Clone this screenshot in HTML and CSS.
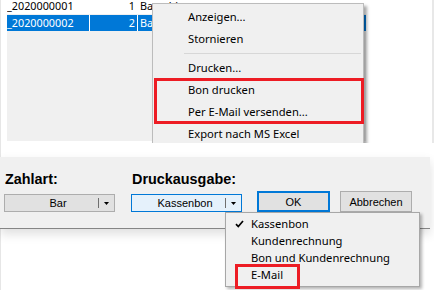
FILE: index.html
```html
<!DOCTYPE html>
<html lang="de">
<head>
  <meta charset="UTF-8" />
  <meta name="viewport" content="width=device-width, initial-scale=1.0" />
  <title>Bon drucken</title>
  <link rel="stylesheet" href="styles.css">
</head>
<body>
  <div class="top">
    <div class="grid">
      <div class="row first">
        <span class="cell">_2020000001</span>
        <span class="cell num">1</span>
        <span class="cell pad">Barzahlung</span>
      </div>
      <div class="row sel">
        <span class="cell">_2020000002</span>
        <span class="cell num">2</span>
        <span class="cell pad">Barzahlung</span>
      </div>
    </div>

    <div class="ctx">
      <div class="ctx-item">Anzeigen...</div>
      <div class="ctx-item">Stornieren</div>
      <div class="ctx-sep"></div>
      <div class="ctx-item">Drucken...</div>
      <div class="ctx-item">Bon drucken</div>
      <div class="ctx-item">Per E-Mail versenden...</div>
      <div class="ctx-item">Export nach MS Excel</div>
    </div>
    <div class="mark mark-menu"></div>
  </div>

  <div class="bottom">
    <div class="dialog">
      <div class="field">
        <div class="label">Zahlart:</div>
        <div class="combo">
          <span class="combo-text">Bar</span>
          <span class="combo-btn"><svg width="5" height="3" viewBox="0 0 5 3"><path d="M0 0h5L2.5 3z" fill="#000"/></svg></span>
        </div>
      </div>
      <div class="field">
        <div class="label">Druckausgabe:</div>
        <div class="combo focus">
          <span class="combo-text">Kassenbon</span>
          <span class="combo-btn"><svg width="5" height="3" viewBox="0 0 5 3"><path d="M0 0h5L2.5 3z" fill="#000"/></svg></span>
        </div>
      </div>
      <div class="buttons">
        <button class="btn default">OK</button>
        <button class="btn">Abbrechen</button>
      </div>
    </div>

    <div class="list">
      <div class="list-item">
        <svg class="check" width="9" height="8" viewBox="0 0 9 8"><path d="M1 4.2l2.3 2.4L8 1" fill="none" stroke="#000" stroke-width="1.7"/></svg>
        Kassenbon
      </div>
      <div class="list-item">Kundenrechnung</div>
      <div class="list-item">Bon und Kundenrechnung</div>
      <div class="list-item">E-Mail</div>
    </div>
    <div class="mark mark-mail"></div>
  </div>
</body>
</html>
```

FILE: styles.css
```css
* { box-sizing: border-box; }
body { margin: 0; width: 434px; height: 290px; background: #fff; font-family: "Noto Sans", "Segoe UI", sans-serif; font-size: 11.2px; color: #000; overflow: hidden; }

/* upper capture: grid with context menu */
.top { position: relative; height: 143px; padding-left: 7px; border-left: 1px solid #e6e6e6; border-right: 2px solid #e8e8e8; overflow: hidden; }
.grid { width: 359px; height: 143px; background: #f0f0f0; margin-left: -1px; }
.row { display: grid; grid-template-columns: 82px 47px 1fr; column-gap: 1px; height: 16px; background: #fff; margin-bottom: 1px; font-size: 10.8px; line-height: 16px; white-space: nowrap; overflow: hidden; }
.row.first { margin-top: -2px; }
.cell { overflow: hidden; }
.cell.num { text-align: right; padding-right: 2px; }
.cell.pad { padding-left: 2px; }
.row.sel .cell { background: #0078d7; color: #fff; }

.ctx { position: absolute; left: 151px; top: 3px; width: 212px; padding: 2px 0; background: #f0f0f0; border: 1px solid #bcbcbc; box-shadow: 3px 3px 3px rgba(0,0,0,0.35); }
.ctx-item { height: 22px; line-height: 22px; padding-left: 35px; white-space: nowrap; }
.ctx-sep { height: 1px; margin: 3px 2px 3px 31px; background: #d7d7d7; }

.mark { position: absolute; border: 3px solid #ed1c24; }
.mark-menu { left: 153px; top: 78px; width: 210px; height: 46px; }

/* lower capture: dialog with open dropdown */
.bottom { position: relative; height: 147px; padding-top: 14px; border-left: 1px solid #e6e6e6; }
.dialog { display: flex; align-items: flex-end; width: 430px; height: 72px; margin-left: -1px; padding: 13px 0 0 4px; background: #f0f0f0; border-bottom: 1px solid #858585; box-shadow: 0 5px 10px rgba(0,0,0,0.13); }
.field { width: 111px; margin-right: 16px; margin-bottom: 16px; }
.field + .field { margin-right: 15px; }
.label { font-family: "Liberation Sans", Arial, sans-serif; font-weight: bold; font-size: 14.4px; line-height: 16px; padding-left: 1px; margin-bottom: 7px; }
.combo { display: flex; height: 18px; border: 1px solid #adadad; background: #e1e1e1; font-family: "Liberation Sans", Arial, sans-serif; font-size: 11px; line-height: 16px; }
.combo.focus { border-color: #0078d7; background: #e5f1fb; }
.combo-text { flex: 1; text-align: center; padding-left: 13px; }
.combo-btn { display: flex; align-items: center; justify-content: center; width: 16px; margin: 3px 0; border-left: 1px solid #6f6f6f; }

.buttons { display: flex; gap: 10px; margin-bottom: 16px; }
.btn { height: 21px; width: 72px; padding: 0; border: 1px solid #adadad; background: #e1e1e1; font-family: "Liberation Sans", Arial, sans-serif; font-size: 11px; color: #000; }
.btn.default { width: 73px; border: 2px solid #0078d7; }

.list { position: absolute; left: 224px; top: 69px; width: 195px; padding: 2px 0 3px; background: #f0f0f0; border: 1px solid #a7a7a7; box-shadow: 2px 2px 3px rgba(0,0,0,0.3); }
.list-item { position: relative; height: 17px; line-height: 17px; padding-left: 25px; white-space: nowrap; }
.check { position: absolute; left: 9px; top: 5px; }
.mark-mail { left: 234px; top: 121px; width: 65px; height: 25px; }
```
